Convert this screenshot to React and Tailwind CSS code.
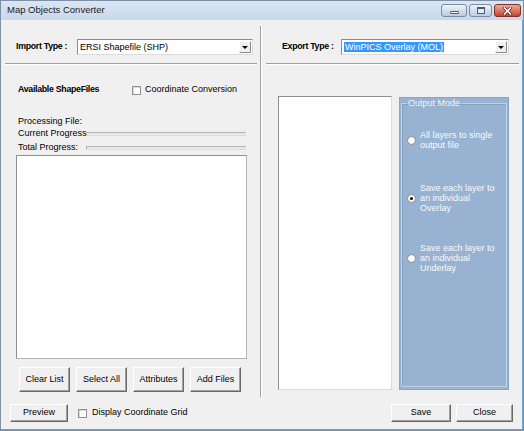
import React from 'react';

const font = "font-['Liberation_Sans',Arial,sans-serif]";

const Btn = ({ label, className = '' }) => (
  <div
    className={`flex items-center justify-center bg-[#f0f0f0] border border-t-white border-l-white border-r-[#696969] border-b-[#696969] shadow-[inset_-1px_-1px_0_#a0a0a0] text-[9px] text-black ${className}`}
  >
    {label}
  </div>
);

const Check = () => (
  <div className="w-[9px] h-[9px] shrink-0 bg-white border border-[#8e8f8f] shadow-[inset_1px_1px_0_#dcdcdc]" />
);

const Radio = ({ on }) => (
  <div className="w-[9px] h-[9px] shrink-0 rounded-full bg-white border border-[#8a8a8a] flex items-center justify-center">
    {on && <div className="w-[3px] h-[3px] rounded-full bg-black" />}
  </div>
);

const Combo = ({ text, selected, className = '' }) => (
  <div
    className={`h-[16px] flex items-center bg-white border border-t-[#8c8c8c] border-l-[#8c8c8c] border-r-[#dcdcdc] border-b-[#dcdcdc] ${className}`}
  >
    <div className="flex-1 pl-[2px] text-[9px] leading-[11px] text-black whitespace-nowrap overflow-hidden">
      {selected ? <span className="bg-[#3399ff] text-white px-[1px]">{text}</span> : text}
    </div>
    <div className="w-[12px] h-[12px] mr-[1px] flex items-center justify-center bg-[#f0f0f0] border border-t-white border-l-white border-r-[#8c8c8c] border-b-[#8c8c8c]">
      <div className="w-0 h-0 border-l-[3px] border-r-[3px] border-t-[3px] border-l-transparent border-r-transparent border-t-black" />
    </div>
  </div>
);

const Etched = ({ className = '' }) => (
  <div className={`h-[2px] border-t border-t-[#a0a0a0] border-b border-b-white ${className}`} />
);

const Progress = ({ className = '' }) => (
  <div className={`h-[4px] bg-[#e8e8e8] border border-t-[#b4b4b4] border-l-[#b4b4b4] border-r-[#dedede] border-b-[#dedede] ${className}`} />
);

const TitleButton = ({ children, red, className = '' }) => (
  <div
    className={`h-[13px] rounded-[3px] border flex items-center justify-center ${
      red
        ? 'border-[#7d3226] bg-linear-to-b from-[#e9a99b] to-[#c4432d]'
        : 'border-[#7a8ca3] bg-linear-to-b from-[#eef3f9] to-[#bccbdd]'
    } ${className}`}
  >
    {children}
  </div>
);

const RadioItem = ({ on, lines, className = '' }) => (
  <div className={`flex items-center pl-[5px] ${className}`}>
    <Radio on={on} />
    <div className="ml-[4px] text-[9px] leading-[10px] text-[#f7f9fc]">
      {lines.map((l) => (
        <div key={l}>{l}</div>
      ))}
    </div>
  </div>
);

export default function App() {
  return (
    <div className={`${font} w-[524px] h-[431px] flex flex-col border border-[#7d90a8] bg-[#c9d9ec]`}>
      <div className="h-[19px] shrink-0 flex items-center justify-between pl-[6px] pr-[2px] bg-linear-to-b from-[#dbe6f3] to-[#c8d8eb]">
        <span className="text-[9.5px] text-[#1b1b1b]">Map Objects Converter</span>
        <div className="flex items-center gap-[2px]">
          <TitleButton className="w-[26px]">
            <div className="mt-[3px] w-[9px] h-[3px] bg-white border border-[#4d5c70] rounded-[1px]" />
          </TitleButton>
          <TitleButton className="w-[23px]">
            <div className="w-[8px] h-[7px] border border-[#4d5c70] border-t-[2px] bg-[#e4ebf4]" />
          </TitleButton>
          <TitleButton red className="w-[27px]">
            <svg width="9" height="8" viewBox="0 0 9 8">
              <path d="M1.5 1 L7.5 7 M7.5 1 L1.5 7" stroke="#5a1a10" strokeWidth="3" strokeLinecap="square" />
              <path d="M1.5 1 L7.5 7 M7.5 1 L1.5 7" stroke="#ffffff" strokeWidth="1.6" strokeLinecap="square" />
            </svg>
          </TitleButton>
        </div>
      </div>

      <div className="flex-1 flex flex-col bg-[#f0f0f0] border-r border-b border-r-[#6aa8d8] border-b-[#5aa2d6]">
        <div className="h-[377px] flex">
          {/* left side */}
          <div className="w-[259px] flex flex-col pt-[19px]">
            <div className="h-[16px] flex items-center pl-[15px]">
              <span className="w-[61px] text-[8.8px] font-bold tracking-[-0.3px] text-black">Import Type :</span>
              <Combo text="ERSI Shapefile (SHP)" className="w-[176px]" />
            </div>
            <Etched className="mt-[8px] ml-[4px] w-[252px]" />

            <div className="mt-[19px] h-[12px] flex items-center pl-[17px]">
              <span className="w-[114px] text-[8.8px] font-bold tracking-[-0.3px] text-black">Available ShapeFiles</span>
              <Check />
              <span className="ml-[4px] text-[9px] text-black">Coordinate Conversion</span>
            </div>

            <div className="mt-[20px] h-[12px] flex items-center pl-[17px] text-[9px] text-black">Processing File:</div>
            <div className="h-[12px] flex items-center pl-[17px] text-[9px] text-black">
              <span className="w-[68px] whitespace-nowrap">Current Progress</span>
              <Progress className="w-[160px]" />
            </div>
            <div className="mt-[2px] h-[12px] flex items-center pl-[17px] text-[9px] text-black">
              <span className="w-[68px] whitespace-nowrap">Total Progress:</span>
              <Progress className="w-[160px]" />
            </div>

            <div className="mt-[1px] ml-[15px] w-[231px] h-[204px] bg-white border border-t-[#8f8f8f] border-l-[#8f8f8f] border-r-[#b4b4b4] border-b-[#b4b4b4]" />

            <div className="mt-[8px] ml-[18px] flex gap-[6px]">
              <Btn label="Clear List" className="w-[51px] h-[25px]" />
              <Btn label="Select All" className="w-[51px] h-[25px]" />
              <Btn label="Attributes" className="w-[51px] h-[25px]" />
              <Btn label="Add Files" className="w-[51px] h-[25px]" />
            </div>
          </div>

          {/* separator */}
          <div className="mt-[6px] w-[2px] border-l border-l-[#a0a0a0] border-r border-r-white" />

          {/* right side */}
          <div className="flex-1 flex flex-col pt-[19px]">
            <div className="h-[16px] flex items-center pl-[20px]">
              <span className="w-[59px] text-[8.8px] font-bold tracking-[-0.3px] text-black">Export Type :</span>
              <Combo text="WinPICS Overlay (MOL)" selected className="w-[168px]" />
            </div>
            <Etched className="mt-[8px] ml-[4px] w-[253px]" />

            <div className="mt-[31px] ml-[16px] flex gap-[7px]">
              <div className="w-[114px] h-[294px] bg-white border border-t-[#8f8f8f] border-l-[#8f8f8f] border-r-[#dcdcdc] border-b-[#dcdcdc]" />
              <div className="mt-[1px] w-[110px] h-[293px] bg-[#98b3d1] border border-[#8aa6c6] px-[1px] pb-[2px] flex">
                <fieldset className="flex-1 border border-[#bfd0e3] shadow-[inset_1px_1px_0_#86a2c2]">
                  <legend className="ml-[5px] px-[1px] text-[9px] leading-[11px] text-[#f2f6fa]">Output Mode</legend>
                  <RadioItem className="mt-[21px]" lines={['All layers to single', 'output file']} />
                  <RadioItem on className="mt-[33px]" lines={['Save each layer to', 'an individual', 'Overlay']} />
                  <RadioItem className="mt-[30px]" lines={['Save each layer to', 'an individual', 'Underlay']} />
                </fieldset>
              </div>
            </div>
          </div>
        </div>

        {/* bottom row */}
        <div className="flex-1 flex items-start pt-[7px] pl-[9px] pr-[9px]">
          <Btn label="Preview" className="w-[58px] h-[18px]" />
          <div className="ml-[10px] h-[18px] flex items-center">
            <Check />
            <span className="ml-[5px] text-[9px] text-black">Display Coordinate Grid</span>
          </div>
          <div className="ml-auto flex gap-[5px]">
            <Btn label="Save" className="w-[60px] h-[18px]" />
            <Btn label="Close" className="w-[57px] h-[18px]" />
          </div>
        </div>
      </div>
    </div>
  );
}
